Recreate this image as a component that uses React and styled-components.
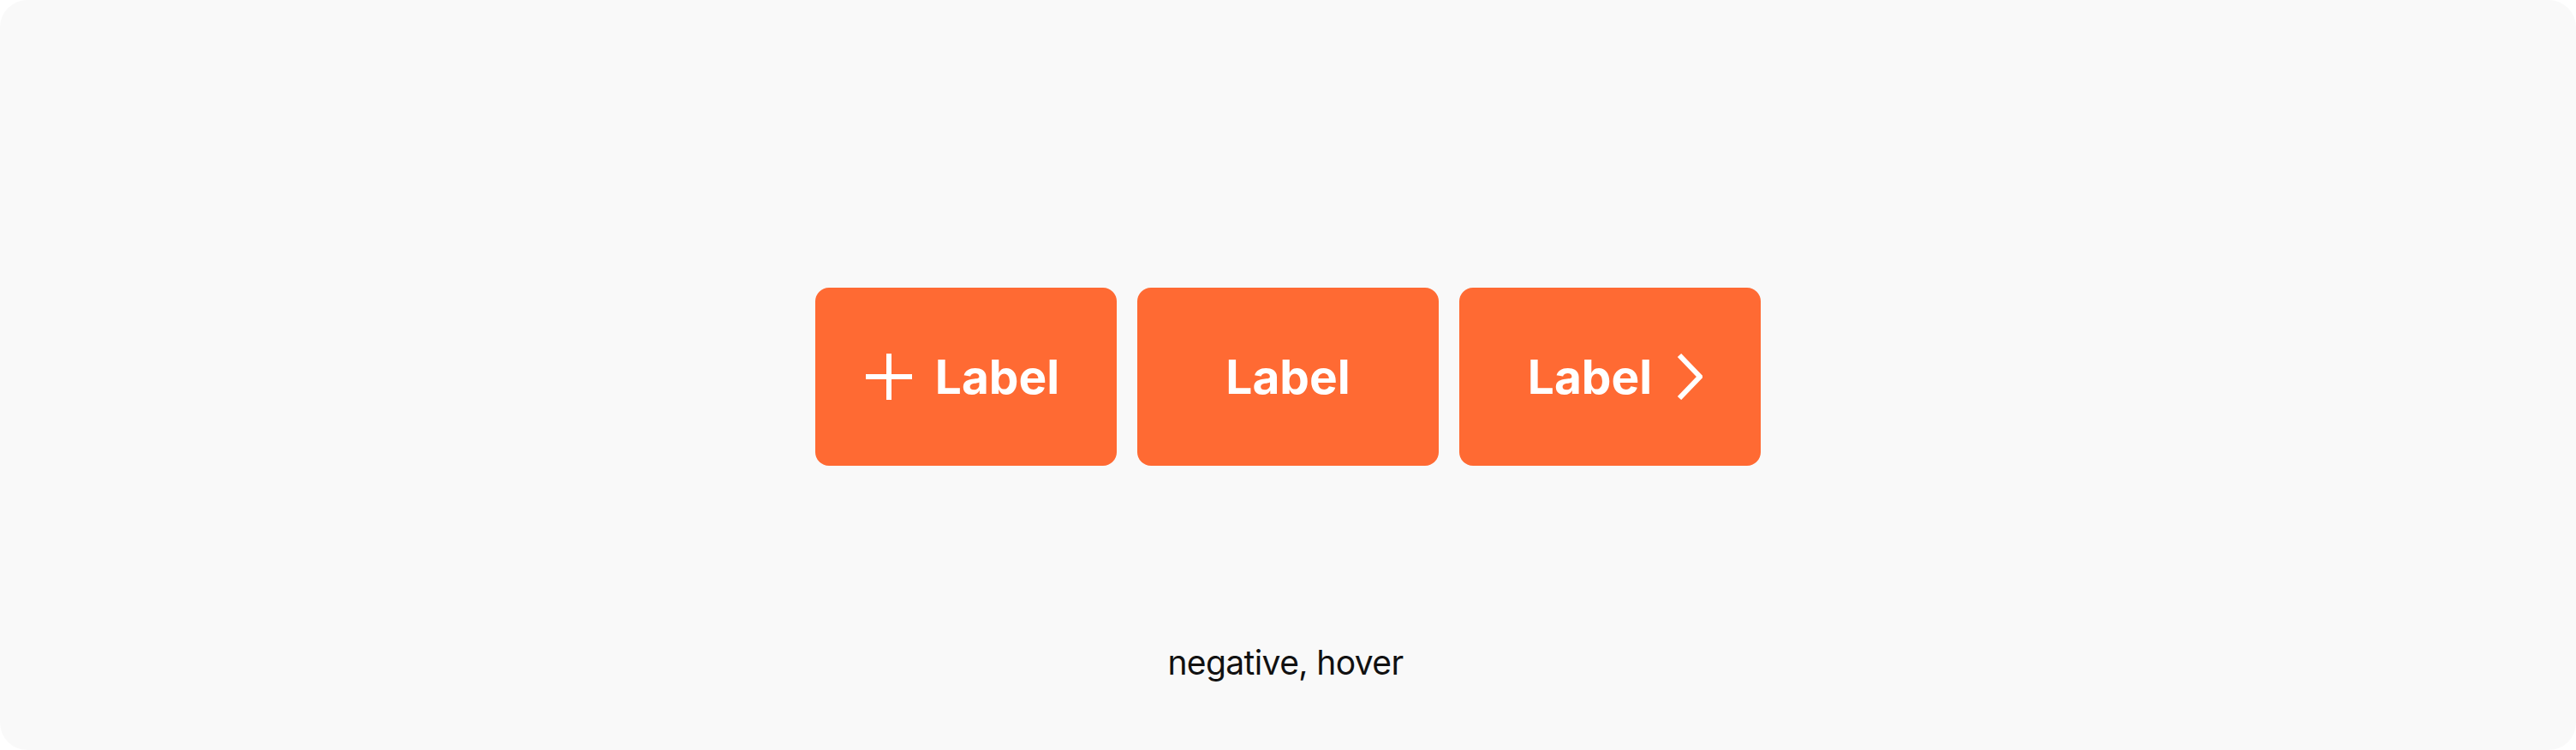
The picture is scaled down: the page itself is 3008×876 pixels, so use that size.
import React from "react";
import styled, { createGlobalStyle } from "styled-components";

const Global = createGlobalStyle`
  html, body { margin: 0; padding: 0; background: #ffffff; }
  body { font-family: Inter, "Noto Sans", sans-serif; }
`;

const Canvas = styled.div`
  box-sizing: border-box;
  width: 3008px;
  height: 876px;
  background: #f9f9f9;
  border-radius: 32px;
  display: flex;
  flex-direction: column;
  align-items: center;
  padding-top: 336px;
`;

const Row = styled.div`
  display: flex;
  gap: 24px;
`;

const Button = styled.button`
  box-sizing: border-box;
  width: 352px;
  height: 208px;
  border: none;
  border-radius: 16px;
  background: #ff6a33;
  color: #ffffff;
  display: flex;
  align-items: center;
  justify-content: center;
  gap: ${(p) => p.$gap || 0}px;
  padding: 0 ${(p) => p.$padR || 0}px 0 ${(p) => p.$padL || 0}px;
  font-family: Inter, "Noto Sans", sans-serif;
  font-weight: 700;
  font-size: 55px;
  line-height: 1;
  cursor: pointer;
`;

const Label = styled.span`
  display: block;
`;

const Icon = styled.svg`
  display: block;
  flex: none;
`;

const Caption = styled.div`
  margin-top: 206px;
  margin-right: 6px;
  font-family: Inter, "Noto Sans", sans-serif;
  font-size: 39px;
  letter-spacing: -0.6px;
  line-height: 48px;
  font-weight: 400;
  color: #111111;
`;

const Plus = () => (
  <Icon width="54" height="54" viewBox="0 0 54 54" fill="none">
    <path d="M0 27H54M27 0V54" stroke="#fff" strokeWidth="6" />
  </Icon>
);

const Chevron = () => (
  <Icon width="30" height="54" viewBox="0 0 30 54" fill="none">
    <path d="M3 2L27 27L3 52" stroke="#fff" strokeWidth="6" strokeLinecap="butt" strokeLinejoin="miter" />
  </Icon>
);

export default function App() {
  return (
    <>
      <Global />
      <Canvas>
        <Row>
          <Button $gap={27} $padR={8}>
            <Plus />
            <Label>Label</Label>
          </Button>
          <Button>
            <Label>Label</Label>
          </Button>
          <Button $gap={29} $padL={12}>
            <Label>Label</Label>
            <Chevron />
          </Button>
        </Row>
        <Caption>negative, hover</Caption>
      </Canvas>
    </>
  );
}
